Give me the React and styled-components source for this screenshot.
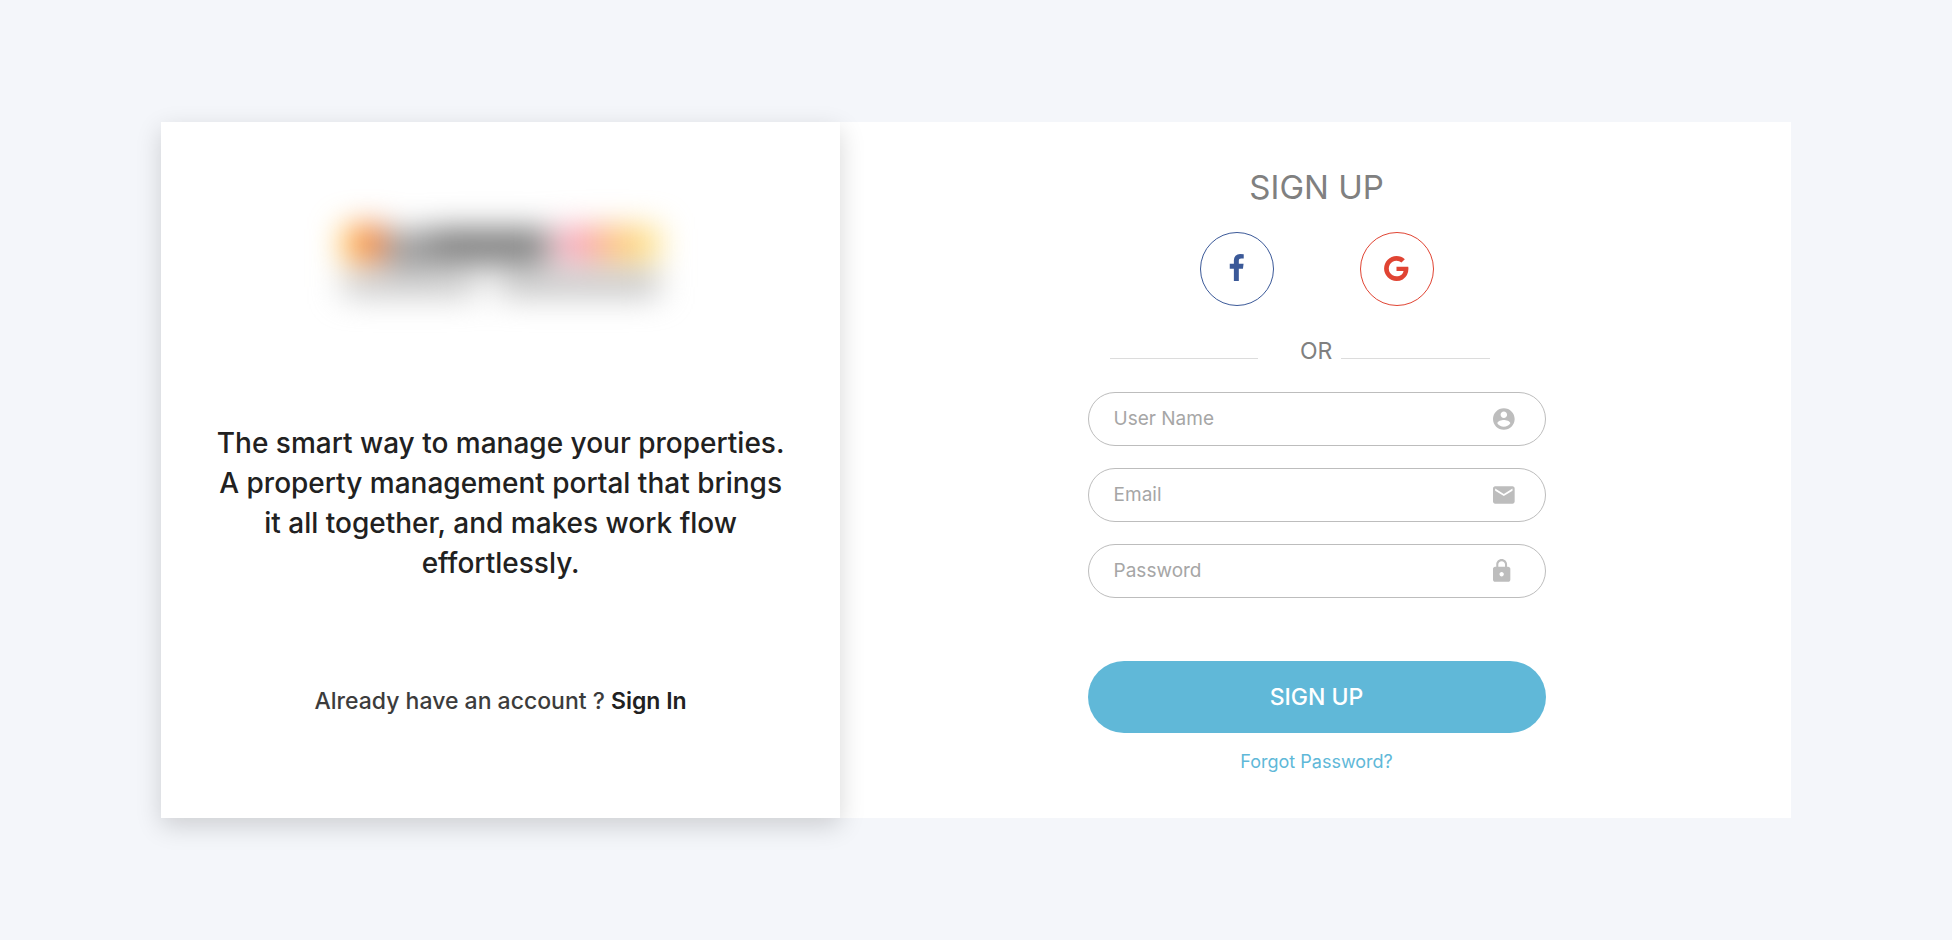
import React from 'react';
import styled, { createGlobalStyle } from 'styled-components';

const GlobalStyle = createGlobalStyle`
  *, *::before, *::after { box-sizing: border-box; }
  body {
    margin: 0;
    padding-right: 8px;
    background: #fff;
    font-family: Inter, "Open Sans", "Liberation Sans", sans-serif;
  }
`;

const Page = styled.main`
  min-height: 100vh;
  padding: 122px 8.25%;
  background: #f4f6fa;
`;

const Card = styled.div`
  display: grid;
  grid-template-columns: 5fr 7fr;
  background: #fff;
`;

const Intro = styled.section`
  position: relative;
  display: flex;
  flex-direction: column;
  align-items: center;
  padding: 58px 50px 102px;
  background: #fff;
  text-align: center;
  box-shadow: 0 8px 24px rgba(0, 0, 0, 0.16);
`;

const Logo = styled.svg`
  width: 400px;
  max-width: 100%;
  height: 160px;
`;

const Tagline = styled.p`
  margin: 83px 0 103px;
  color: #212121;
  font-size: 28px;
  font-weight: 500;
  line-height: 40px;
`;

const Account = styled.p`
  margin: 0;
  color: #3c3c3c;
  font-size: 23px;
  font-weight: 500;
  line-height: 30px;
`;

const SignInLink = styled.a`
  color: #212121;
  font-weight: 600;
  text-decoration: none;
`;

const FormPanel = styled.section`
  display: flex;
  justify-content: center;
  padding: 45px 24px 44px 26px;
`;

const Form = styled.form`
  display: flex;
  flex-direction: column;
  align-items: center;
  width: 100%;
  max-width: 458px;
`;

const Title = styled.h1`
  margin: 0 0 25px;
  color: #808080;
  font-size: 33px;
  font-weight: 400;
  line-height: 40px;
`;

const SocialRow = styled.div`
  display: flex;
  gap: 86px;
  margin-bottom: 30px;
`;

const SocialButton = styled.button`
  display: flex;
  align-items: center;
  justify-content: center;
  width: 74px;
  height: 74px;
  padding: 0;
  border: 1px solid;
  border-radius: 50%;
  background: transparent;
  color: ${(p) => p.$color};
  cursor: pointer;
`;

const BrandIcon = styled.svg`
  width: 29px;
  height: 29px;
  margin-bottom: 2px;
  fill: currentColor;
`;

const Divider = styled.div`
  display: flex;
  align-items: flex-end;
  width: 100%;
  margin-bottom: 26px;
  padding: 0 56px 0 22px;
`;

const Rule = styled.span`
  flex: 1;
  height: 1px;
  margin-bottom: 7px;
  background: #dcdcdc;
`;

const DividerText = styled.span`
  margin: 0 9px 0 42px;
  color: #808080;
  font-size: 23px;
  font-weight: 400;
  line-height: 30px;
`;

const Fields = styled.div`
  display: flex;
  flex-direction: column;
  gap: 22px;
  width: 100%;
  margin-bottom: 63px;
`;

const Field = styled.label`
  display: flex;
  align-items: center;
  height: 54px;
  padding: 0 26px 0 25px;
  border: 1px solid #bdbdbd;
  border-radius: 27px;
  color: #bdbdbd;
`;

const Input = styled.input`
  flex: 1;
  min-width: 0;
  padding: 0;
  border: 0;
  outline: 0;
  background: transparent;
  color: #555;
  font-family: inherit;
  font-size: 19px;
  line-height: 24px;
  &::placeholder { color: #a6a6a6; opacity: 1; }
`;

const FieldIcon = styled.svg`
  width: 26px;
  height: 26px;
  fill: currentColor;
`;

const Submit = styled.button`
  width: 100%;
  height: 72px;
  margin-bottom: 17px;
  border: 0;
  border-radius: 36px;
  background: #60b8d8;
  color: #fff;
  font-family: inherit;
  font-size: 23px;
  font-weight: 500;
  line-height: 30px;
  cursor: pointer;
`;

const ForgotLink = styled.a`
  color: #60b8d8;
  font-size: 18px;
  line-height: 24px;
  text-decoration: none;
`;

const FIELDS = [
  {
    name: 'username',
    type: 'text',
    label: 'User Name',
    viewBox: '2 0 24 24',
    path: 'M12 2C6.48 2 2 6.48 2 12s4.48 10 10 10 10-4.48 10-10S17.52 2 12 2zm0 3c1.66 0 3 1.34 3 3s-1.34 3-3 3-3-1.34-3-3 1.34-3 3-3zm0 14.2c-2.5 0-4.71-1.28-6-3.22.03-1.99 4-3.08 6-3.08 1.99 0 5.97 1.09 6 3.08-1.29 1.94-3.5 3.22-6 3.22z',
  },
  {
    name: 'email',
    type: 'email',
    label: 'Email',
    viewBox: '2 0 24 24',
    path: 'M20 4H4c-1.1 0-1.99.9-1.99 2L2 18c0 1.1.9 2 2 2h16c1.1 0 2-.9 2-2V6c0-1.1-.9-2-2-2zm0 4l-8 5-8-5V6l8 5 8-5v2z',
  },
  {
    name: 'password',
    type: 'password',
    label: 'Password',
    viewBox: '4 0 24 24',
    path: 'M18 8h-1V6c0-2.76-2.24-5-5-5S7 3.24 7 6v2H6c-1.1 0-2 .9-2 2v10c0 1.1.9 2 2 2h12c1.1 0 2-.9 2-2V10c0-1.1-.9-2-2-2zm-6 9c-1.1 0-2-.9-2-2s.9-2 2-2 2 .9 2 2-.9 2-2 2zm3.1-9H8.9V6c0-1.71 1.39-3.1 3.1-3.1 1.71 0 3.1 1.39 3.1 3.1v2z',
  },
];

const FACEBOOK =
  'M1343 12v264h-157q-86 0-116 36t-30 108v189h293l-39 296h-254v759h-306v-759h-255v-296h255v-218q0-186 104-288.5t277-102.5q147 0 228 12z';
const GOOGLE =
  'M896 786h725q12 67 12 128 0 217-91 387.5t-259.5 266.5-386.5 96q-157 0-299-60.5t-245-163.5-163.5-245-60.5-299 60.5-299 163.5-245 245-163.5 299-60.5q300 0 515 201l-209 201q-123-119-306-119-129 0-238.5 65t-173.5 176.5-64 243.5 64 243.5 173.5 176.5 238.5 65q87 0 160-24t120-60 82-82 51.5-87 22.5-78h-436v-264z';

function BlurredLogo() {
  return (
    <Logo viewBox="0 0 400 160" role="img" aria-label="Logo">
      <defs>
        <filter
          id="soft"
          filterUnits="userSpaceOnUse"
          x="-20"
          y="-20"
          width="440"
          height="200"
          colorInterpolationFilters="sRGB"
        >
          <feGaussianBlur stdDeviation="16" />
        </filter>
      </defs>
      <g filter="url(#soft)">
        <rect x="42" y="48" width="16" height="32" fill="#ffb830" />
        <rect x="58" y="46" width="24" height="34" fill="#f56a20" />
        <rect x="84" y="52" width="46" height="34" fill="#909090" />
        <rect x="130" y="50" width="118" height="32" fill="#6c6c6c" />
        <rect x="256" y="48" width="40" height="32" fill="#f79aac" />
        <rect x="296" y="48" width="32" height="32" fill="#fcb86c" />
        <rect x="328" y="48" width="30" height="32" fill="#fdd970" />
        <rect x="42" y="94" width="134" height="20" fill="#bababa" />
        <rect x="198" y="94" width="160" height="20" fill="#b2b2b2" />
      </g>
    </Logo>
  );
}

export default function App() {
  return (
    <>
      <GlobalStyle />
      <Page>
        <Card>
          <Intro>
            <BlurredLogo />
            <Tagline>
              The smart way to manage your properties. A property management portal that brings it
              all together, and makes work flow effortlessly.
            </Tagline>
            <Account>
              Already have an account ? <SignInLink href="#signin">Sign In</SignInLink>
            </Account>
          </Intro>
          <FormPanel>
            <Form onSubmit={(e) => e.preventDefault()}>
              <Title>SIGN UP</Title>
              <SocialRow>
                <SocialButton type="button" $color="#3b5998" aria-label="Facebook">
                  <BrandIcon viewBox="0 0 1792 1792">
                    <path d={FACEBOOK} />
                  </BrandIcon>
                </SocialButton>
                <SocialButton type="button" $color="#e04433" aria-label="Google">
                  <BrandIcon viewBox="0 0 1792 1792">
                    <path d={GOOGLE} />
                  </BrandIcon>
                </SocialButton>
              </SocialRow>
              <Divider>
                <Rule />
                <DividerText>OR</DividerText>
                <Rule />
              </Divider>
              <Fields>
                {FIELDS.map((f) => (
                  <Field key={f.name}>
                    <Input type={f.type} name={f.name} placeholder={f.label} aria-label={f.label} />
                    <FieldIcon viewBox={f.viewBox} aria-hidden="true">
                      <path d={f.path} />
                    </FieldIcon>
                  </Field>
                ))}
              </Fields>
              <Submit type="submit">SIGN UP</Submit>
              <ForgotLink href="#forgot">Forgot Password?</ForgotLink>
            </Form>
          </FormPanel>
        </Card>
      </Page>
    </>
  );
}
